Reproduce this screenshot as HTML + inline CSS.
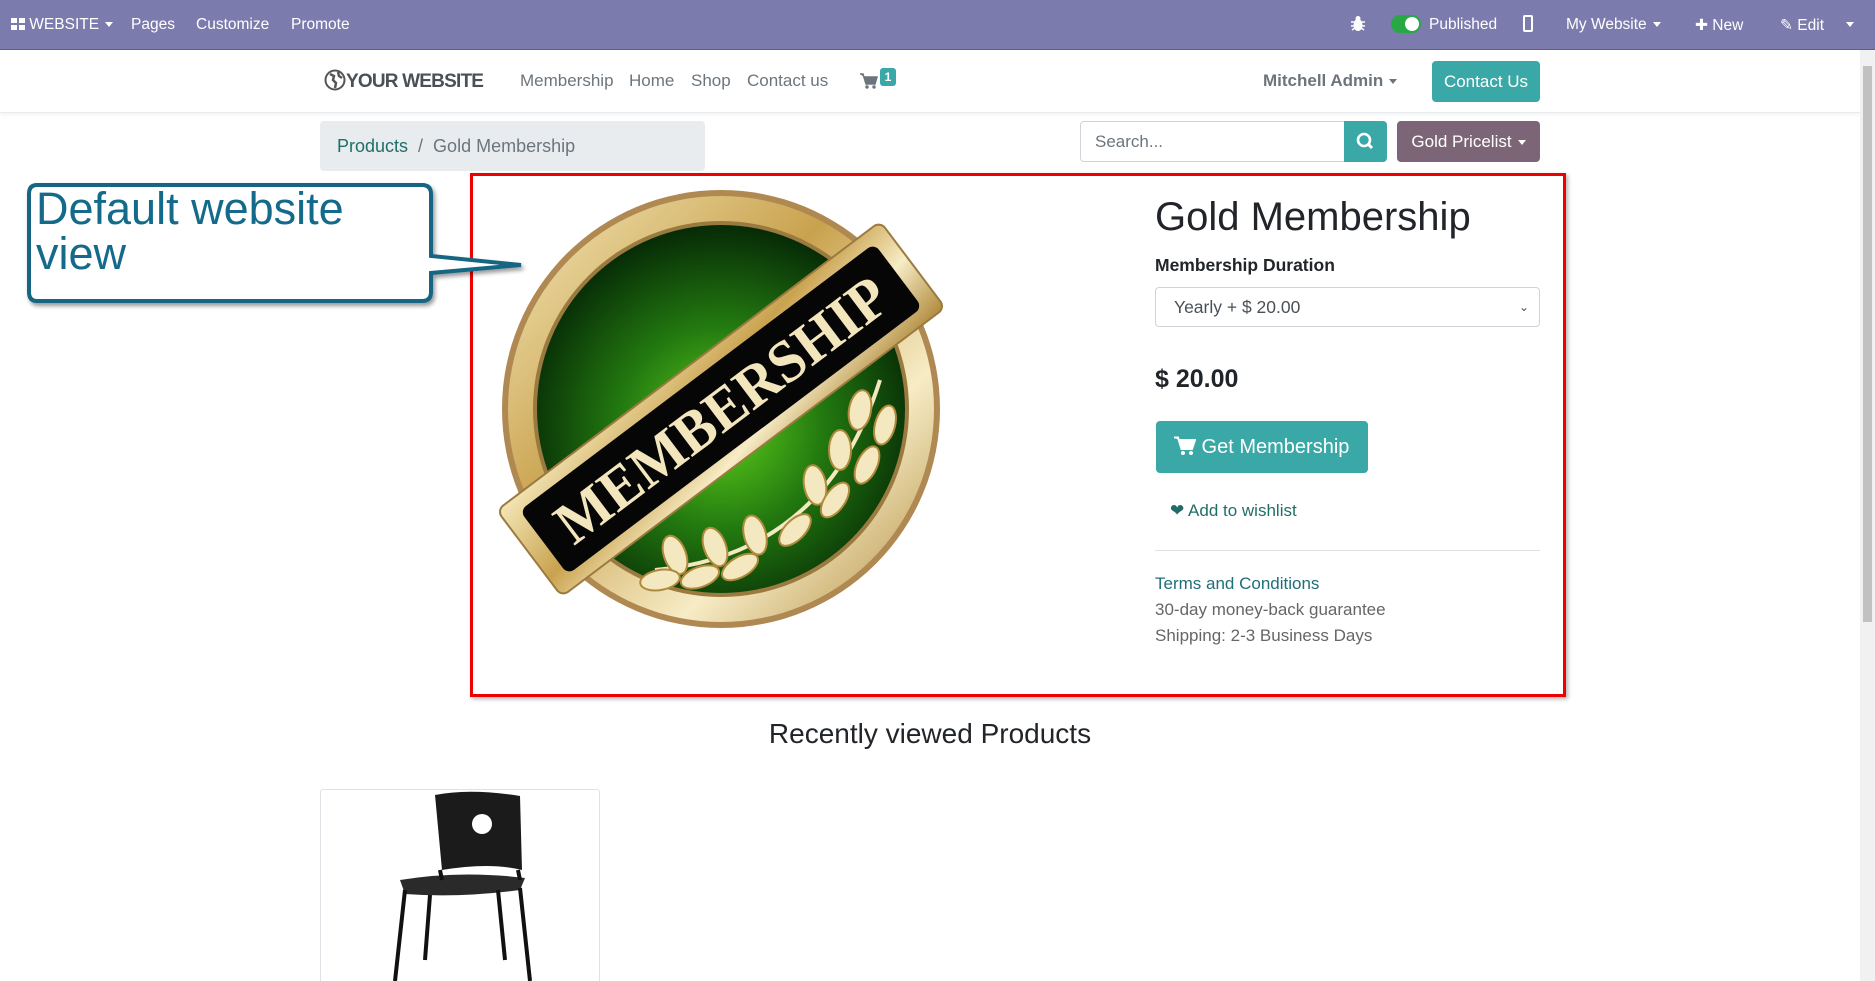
<!DOCTYPE html>
<html><head><meta charset="utf-8"><style>
*{box-sizing:border-box;margin:0;padding:0}
html,body{width:1875px;height:981px;overflow:hidden}
body{background:#fff;font-family:"Liberation Sans",sans-serif;position:relative;color:#212529}
.abs{position:absolute;white-space:nowrap}
.top{left:0;top:0;width:1875px;height:50px;background:#7c7bad;border-bottom:1px solid #5f5e8a;color:#fff;font-size:15.5px}
.top span{position:absolute;top:16px;white-space:nowrap}
.hdr{left:0;top:51px;width:1860px;height:62px;border-bottom:1px solid #e9ecef;box-shadow:0 2px 4px rgba(0,0,0,.05)}
.nav{top:71px;font-size:17px;color:#6c757d}
.caret{display:inline-block;border-left:4px solid transparent;border-right:4px solid transparent;border-top:5px solid currentColor;vertical-align:middle;margin-left:6px}
.teal{background:#3aa8a6;color:#fff}
</style></head><body>
<div class="abs top">
  <span style="left:11px"><svg width="14" height="12" style="vertical-align:-1px"><rect x="0" y="0" width="6" height="5" fill="#fff"/><rect x="8" y="0" width="6" height="5" fill="#fff"/><rect x="0" y="7" width="6" height="5" fill="#fff"/><rect x="8" y="7" width="6" height="5" fill="#fff"/></svg> WEBSITE<i class="caret"></i></span>
  <span style="left:131px">Pages</span>
  <span style="left:196px">Customize</span>
  <span style="left:291px">Promote</span>
  <span style="left:1351px;top:15px"><svg width="14" height="17"><ellipse cx="7" cy="10" rx="4.5" ry="6" fill="#fff"/><circle cx="7" cy="3.5" r="2.5" fill="#fff"/><path d="M0 7 H14 M0 11 H14 M1 15 L4 13 M13 15 L10 13" stroke="#fff" stroke-width="1.5"/></svg></span>
  <span style="left:1391px;top:15px;width:30px;height:18px;border-radius:9px;background:#28a745"><i style="position:absolute;right:2px;top:2px;width:14px;height:14px;border-radius:50%;background:#fff"></i></span>
  <span style="left:1429px">Published</span>
  <span style="left:1523px;top:15px;width:10px;height:17px;border:2px solid #fff;border-radius:2px"></span>
  <span style="left:1566px">My Website<i class="caret"></i></span>
  <span style="left:1695px">&#10010; New</span>
  <span style="left:1780px">&#9998; Edit</span>
  <span style="left:1840px"><i class="caret"></i></span>
</div>
<div class="abs hdr"></div>
<div class="abs" style="left:324px;top:69px;font-size:19px;color:#495057;font-weight:bold;letter-spacing:-0.8px"><svg width="22" height="22" style="vertical-align:-4px"><circle cx="11" cy="11" r="9.5" fill="none" stroke="#555" stroke-width="2"/><path d="M6 5 L10 7 L9 11 L12 14 L11 19 M14 3 L15 7 L18 9" stroke="#555" stroke-width="2.5" fill="none"/></svg>YOUR WEBSITE</div>
<div class="abs nav" style="left:520px">Membership</div>
<div class="abs nav" style="left:629px">Home</div>
<div class="abs nav" style="left:691px">Shop</div>
<div class="abs nav" style="left:747px">Contact us</div>
<div class="abs" style="left:860px;top:73px"><svg width="18" height="16"><path d="M0 1 H3 L6 11 H15 L17 4 H4" fill="#6c757d" stroke="#6c757d" stroke-width="1.5"/><circle cx="7" cy="14" r="1.7" fill="#6c757d"/><circle cx="14" cy="14" r="1.7" fill="#6c757d"/></svg></div>
<div class="abs teal" style="left:880px;top:68px;width:16px;height:18px;border-radius:3px;font-size:12px;font-weight:bold;text-align:center;line-height:18px">1</div>
<div class="abs" style="left:1263px;top:71px;font-size:17px;font-weight:bold;color:#6c757d">Mitchell Admin<i class="caret"></i></div>
<div class="abs teal" style="left:1432px;top:61px;width:108px;height:41px;border-radius:4px;font-size:17px;text-align:center;line-height:41px">Contact Us</div>
<div class="abs" style="left:320px;top:121px;width:385px;height:50px;background:#e9ecef;border-radius:4px;font-size:18px;line-height:50px;padding-left:17px;color:#6c757d"><span style="color:#1f6f68">Products</span> &nbsp;/&nbsp; Gold Membership</div>
<div class="abs" style="left:1080px;top:121px;width:265px;height:41px;border:1px solid #ced4da;border-radius:4px 0 0 4px;font-size:17px;color:#6c757d;line-height:39px;padding-left:14px">Search...</div>
<div class="abs teal" style="left:1344px;top:121px;width:43px;height:41px;border-radius:0 4px 4px 0"><svg width="43" height="41"><circle cx="20" cy="19" r="6" fill="none" stroke="#fff" stroke-width="2.6"/><path d="M24 23 L28 27" stroke="#fff" stroke-width="3"/></svg></div>
<div class="abs" style="left:1397px;top:121px;width:143px;height:41px;background:#7c6577;border-radius:4px;color:#fff;font-size:17px;line-height:41px;text-align:center">Gold Pricelist<i class="caret"></i></div>
<div class="abs" style="left:470px;top:173px;width:1096px;height:524px;border:3px solid #e00;box-shadow:2px 2px 4px rgba(0,0,0,.3)"></div>
<svg class="abs" style="left:20px;top:178px" width="520" height="132">
<defs><filter id="sh"><feDropShadow dx="2" dy="3" stdDeviation="2" flood-opacity=".4"/></filter></defs>
<path d="M17 7 H402 Q411 7 411 16 V78 L501 87 L411 95 V114 Q411 123 402 123 H17 Q9 123 9 114 V16 Q9 7 17 7 Z" fill="#fff" stroke="#136582" stroke-width="4" filter="url(#sh)"/>
</svg>
<div class="abs" style="left:36px;top:186px;font-size:45px;line-height:45px;color:#136a8a">Default website<br>view</div>
<svg class="abs" style="left:495px;top:185px" width="460" height="445" viewBox="0 0 460 445">
<defs>
<radialGradient id="g" cx="50%" cy="55%" r="55%"><stop offset="0" stop-color="#5fcf1a"/><stop offset=".5" stop-color="#237a10"/><stop offset="1" stop-color="#062a06"/></radialGradient>
<linearGradient id="gold" x1="0" y1="0" x2="1" y2="1"><stop offset="0" stop-color="#f4e7b8"/><stop offset=".4" stop-color="#c9a24e"/><stop offset=".7" stop-color="#f7ecc6"/><stop offset="1" stop-color="#b08a3c"/></linearGradient>
</defs>
<circle cx="226" cy="224" r="219" fill="#b08852"/>
<circle cx="226" cy="224" r="213" fill="url(#gold)"/>
<circle cx="226" cy="224" r="188" fill="#9a7a3e"/>
<circle cx="226" cy="224" r="184" fill="url(#g)"/>
<g fill="#f3e8c0" stroke="#b08a3c" stroke-width="2">
<path d="M160 385 Q330 370 385 195" fill="none" stroke="#f3e8c0" stroke-width="4"/>
<ellipse cx="180" cy="370" rx="11" ry="20" transform="rotate(-20 180 370)"/>
<ellipse cx="220" cy="362" rx="11" ry="20" transform="rotate(-20 220 362)"/>
<ellipse cx="260" cy="350" rx="11" ry="20" transform="rotate(-15 260 350)"/>
<ellipse cx="320" cy="300" rx="11" ry="20" transform="rotate(-10 320 300)"/>
<ellipse cx="345" cy="265" rx="11" ry="20" transform="rotate(0 345 265)"/>
<ellipse cx="365" cy="225" rx="11" ry="20" transform="rotate(10 365 225)"/>
<ellipse cx="165" cy="395" rx="20" ry="10" transform="rotate(-10 165 395)"/>
<ellipse cx="205" cy="392" rx="20" ry="10" transform="rotate(-20 205 392)"/>
<ellipse cx="245" cy="382" rx="20" ry="10" transform="rotate(-30 245 382)"/>
<ellipse cx="300" cy="345" rx="20" ry="10" transform="rotate(-45 300 345)"/>
<ellipse cx="340" cy="315" rx="20" ry="10" transform="rotate(-55 340 315)"/>
<ellipse cx="372" cy="280" rx="20" ry="10" transform="rotate(-65 372 280)"/>
<ellipse cx="390" cy="240" rx="20" ry="10" transform="rotate(-75 390 240)"/>
</g>
<g transform="rotate(-37 226 224)">
<rect x="-14" y="170" width="480" height="108" rx="8" fill="url(#gold)" stroke="#9a7a3e" stroke-width="2"/>
<rect x="4" y="184" width="444" height="80" rx="8" fill="#060606"/>
<text x="226" y="245" text-anchor="middle" font-family="Liberation Serif,serif" font-size="60" font-weight="bold" fill="#f3e6bd" textLength="400" lengthAdjust="spacingAndGlyphs">MEMBERSHIP</text>
</g>
</svg>
<div class="abs" style="left:1155px;top:195px;font-size:40px;color:#212529">Gold Membership</div>
<div class="abs" style="left:1155px;top:255px;font-size:17.5px;font-weight:bold">Membership Duration</div>
<div class="abs" style="left:1155px;top:287px;width:385px;height:40px;border:1px solid #ced4da;border-radius:4px;font-size:17.5px;line-height:38px;padding-left:18px;color:#495057">Yearly + $ 20.00<span style="position:absolute;right:10px;top:0;font-size:12px">&#8964;</span></div>
<div class="abs" style="left:1155px;top:365px;font-size:25px;font-weight:bold">$ 20.00</div>
<div class="abs teal" style="left:1156px;top:421px;width:212px;height:52px;border-radius:4px;font-size:20px;line-height:52px;padding-left:18px"><svg width="22" height="19" style="vertical-align:-2px"><path d="M0 1.5 H4 L7.5 13 H18 L21 4 H5" fill="#fff" stroke="#fff" stroke-width="2"/><circle cx="9" cy="17" r="2" fill="#fff"/><circle cx="17" cy="17" r="2" fill="#fff"/></svg> Get Membership</div>
<div class="abs" style="left:1170px;top:501px;font-size:17px;color:#1f6f68"><span style="color:#236a6a">&#10084;</span> Add to wishlist</div>
<div class="abs" style="left:1155px;top:550px;width:385px;height:1px;background:#dee2e6"></div>
<div class="abs" style="left:1155px;top:571px;font-size:17px;line-height:26px;color:#666"><span style="color:#1f6f78">Terms and Conditions</span><br>30-day money-back guarantee<br>Shipping: 2-3 Business Days</div>
<div class="abs" style="left:0;width:1860px;top:718px;font-size:28px;text-align:center">Recently viewed Products</div>
<div class="abs" style="left:320px;top:789px;width:280px;height:200px;border:1px solid #dee2e6;border-radius:3px"></div>
<svg class="abs" style="left:380px;top:790px" width="160" height="191">
<path d="M55 5 Q90 -2 140 6 L142 80 Q110 72 62 80 Z" fill="#1b1b1b"/>
<circle cx="102" cy="34" r="10" fill="#fff"/>
<path d="M20 90 Q80 80 145 88 L140 100 Q80 108 25 104 Z" fill="#2a2a2a"/>
<path d="M25 100 L15 191 M50 105 L45 170 M140 98 L150 191 M118 100 L125 170 M60 80 L62 90 M138 80 L140 90" stroke="#111" stroke-width="4" fill="none"/>
</svg>
<div class="abs" style="left:1860px;top:50px;width:15px;height:931px;background:#f1f1f1"></div>
<div class="abs" style="left:1863px;top:66px;width:9px;height:556px;background:#c1c1c1"></div>
</body></html>
